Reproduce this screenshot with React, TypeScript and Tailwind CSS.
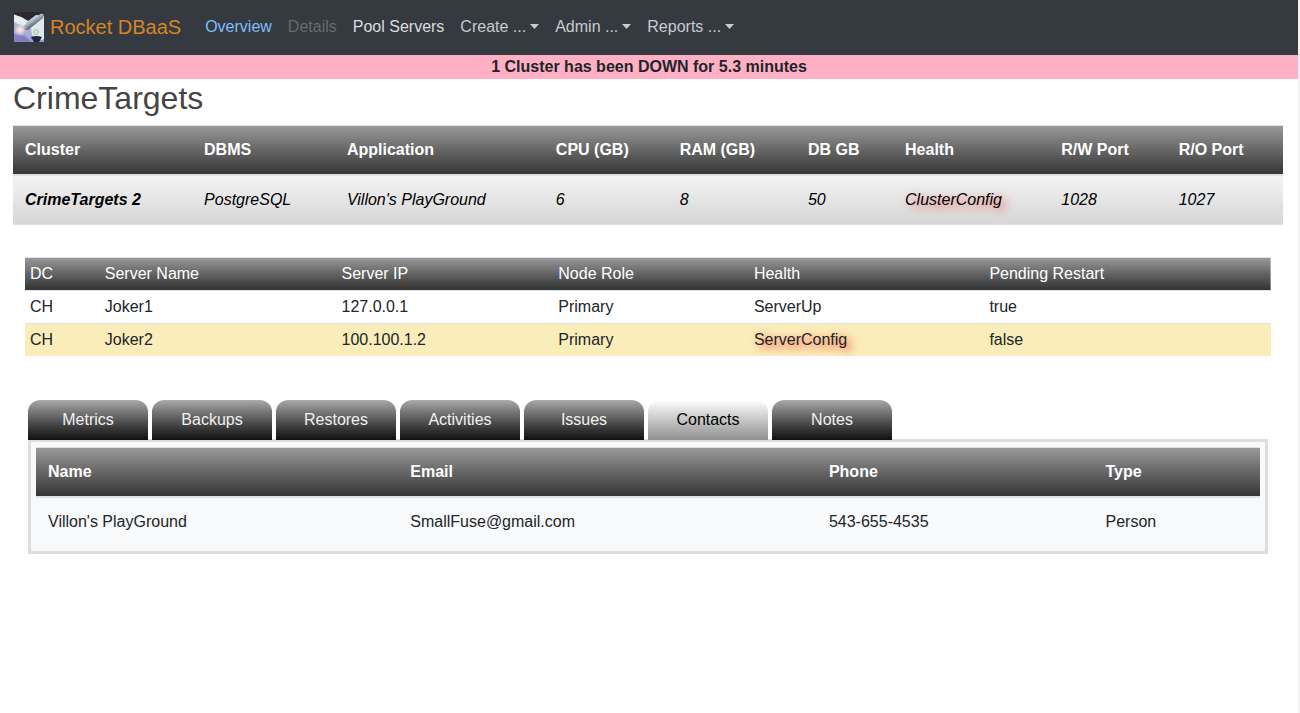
import React from "react";

const clusterHeads = ["Cluster", "DBMS", "Application", "CPU (GB)", "RAM (GB)", "DB GB", "Health", "R/W Port", "R/O Port"];
const clusterRow = ["CrimeTargets 2", "PostgreSQL", "Villon's PlayGround", "6", "8", "50", "ClusterConfig", "1028", "1027"];

const serverHeads = ["DC", "Server Name", "Server IP", "Node Role", "Health", "Pending Restart"];
const serverRows = [
  ["CH", "Joker1", "127.0.0.1", "Primary", "ServerUp", "true"],
  ["CH", "Joker2", "100.100.1.2", "Primary", "ServerConfig", "false"],
];

const contactHeads = ["Name", "Email", "Phone", "Type"];
const contactRow = ["Villon's PlayGround", "SmallFuse@gmail.com", "543-655-4535", "Person"];

const tabs = ["Metrics", "Backups", "Restores", "Activities", "Issues", "Contacts", "Notes"];

const clusterCols = ["w-[14.1%]", "w-[11.25%]", "w-[16.45%]", "w-[9.75%]", "w-[10.1%]", "w-[7.65%]", "w-[12.3%]", "w-[9.25%]", "w-[9.15%]"];
const serverCols = ["w-[6%]", "w-[19%]", "w-[17.4%]", "w-[15.7%]", "w-[18.9%]", "w-[23%]"];
const contactCols = ["w-[29.6%]", "w-[34.2%]", "w-[22.6%]", "w-[13.6%]"];

function Logo() {
  return (
    <svg viewBox="0 0 30 30" className="size-[30px]" aria-hidden="true">
      <defs>
        <linearGradient id="sky" x1="0" y1="0" x2="0" y2="1">
          <stop offset="0" stopColor="#d9e3ee" />
          <stop offset="0.5" stopColor="#a9a9d6" />
          <stop offset="1" stopColor="#9a98cc" />
        </linearGradient>
        <linearGradient id="hull" gradientUnits="userSpaceOnUse" x1="17" y1="6" x2="21" y2="12">
          <stop offset="0" stopColor="#d5dde0" />
          <stop offset="0.5" stopColor="#a3afb5" />
          <stop offset="1" stopColor="#65727a" />
        </linearGradient>
        <radialGradient id="flame">
          <stop offset="0" stopColor="#fff3dc" />
          <stop offset="0.5" stopColor="#e6d5d6" stopOpacity="0.8" />
          <stop offset="1" stopColor="#b9b0d8" stopOpacity="0" />
        </radialGradient>
        <filter id="soften">
          <feGaussianBlur stdDeviation="0.5" />
        </filter>
      </defs>
      <rect width="30" height="30" fill="url(#sky)" />
      <g filter="url(#soften)">
        <path d="M-1 -1H31V4L22 3 14 9 7 5 -1 3Z" fill="#292b2f" />
        <path d="M-1 2 7 5 14 9 9 15 4 12 -1 9Z" fill="#e8eef0" />
        <path d="M17 12 31 4V27L27 28 23 25 19 25 16 18Z" fill="#dde8f0" />
        <path d="M-1 22 6 22 12 25 18 31H-1Z" fill="#8280c0" />
        <path d="M10 17 17 16 18 24 13 26Z" fill="#a9afdb" />
        <path d="M10 14 25 3Q28 0 30 3L29 6 14 18 10 18Z" fill="url(#hull)" />
        <circle cx="6" cy="18" r="7" fill="url(#flame)" />
        <circle cx="22" cy="20" r="2.5" fill="#d2e0dd" stroke="#a9cb86" strokeWidth="1" />
        <path d="M17 25Q22 23 28 25L25 30H20Z" fill="#20263a" />
      </g>
    </svg>
  );
}

function Menu({ label }: { label: string }) {
  return (
    <button type="button" className="flex items-center gap-1 px-2 py-2 text-[#c8cbcf]">
      {label}
      <svg viewBox="0 0 9 5" className="mb-px h-[5px] w-[9px] fill-current" aria-hidden="true">
        <path d="M0 0H9L4.5 5Z" />
      </svg>
    </button>
  );
}

export default function App() {
  return (
    <div className="min-h-screen border-r-2 border-[#f1f1f1] bg-white font-['Liberation_Sans',Arial,sans-serif] text-base text-[#212529]">
      <nav className="flex h-[55px] items-center bg-[#343a40] px-3.5 pb-0.5">
        <a href="#home" className="mr-4 flex items-center gap-1.5 text-xl text-[#d68424]">
          <Logo />
          Rocket DBaaS
        </a>
        <a href="#overview" className="px-2 py-2 text-[#80bdff]">Overview</a>
        <a href="#details" aria-disabled="true" className="px-2 py-2 text-[#666b70]">Details</a>
        <a href="#pool" className="px-2 py-2 text-[#dcdddf]">Pool Servers</a>
        <Menu label="Create ..." />
        <Menu label="Admin ..." />
        <Menu label="Reports ..." />
      </nav>

      <div role="alert" className="bg-[#ffb0c4] text-center font-bold">
        1 Cluster has been DOWN for 5.3 minutes
      </div>

      <main className="pr-[15px] pl-[13px]">
        <h1 className="mb-2 text-[32px] leading-[38px] text-[#444]">CrimeTargets</h1>

        <table className="w-full table-fixed border-separate border-spacing-0 text-left">
          <thead>
            <tr className="bg-linear-to-b from-[#9c9c9c] to-[#333] text-white">
              {clusterHeads.map((h, i) => (
                <th key={h} className={`${clusterCols[i]} border-t border-b-2 border-[#dee2e6] px-3 py-3 font-bold`}>{h}</th>
              ))}
            </tr>
          </thead>
          <tbody>
            <tr className="bg-linear-to-b from-[#f3f3f3] to-[#d6d6d6] text-black italic">
              {clusterRow.map((c, i) => (
                <td key={i} className={`border-b border-[#dee2e6] px-3 py-3 ${i === 0 ? "font-bold" : ""} ${i === 6 ? "[text-shadow:4px_3px_10px_#ff000099]" : ""}`}>{c}</td>
              ))}
            </tr>
          </tbody>
        </table>

        <div className="mt-8 px-3">
          <table className="w-full table-fixed border-separate border-spacing-0 text-left">
            <thead>
              <tr className="bg-linear-to-b from-[#9c9c9c] to-[#333] text-white">
                {serverHeads.map((h, i) => (
                  <th key={h} className={`${serverCols[i]} border-t border-[#dee2e6] px-[5px] py-1 font-normal`}>{h}</th>
                ))}
              </tr>
            </thead>
            <tbody>
              {serverRows.map((row, r) => (
                <tr key={r} className={r === 1 ? "bg-[#faedba]" : ""}>
                  {row.map((c, i) => (
                    <td key={i} className={`border-t border-[#dee2e6] px-[5px] py-1 ${c === "ServerConfig" ? "[text-shadow:4px_3px_10px_#ff0000cc]" : ""}`}>{c}</td>
                  ))}
                </tr>
              ))}
            </tbody>
          </table>
        </div>

        <section className="mt-11 px-[15px]">
          <div role="tablist" className="relative flex gap-1">
            {tabs.map((t) => (
              <button
                key={t}
                type="button"
                role="tab"
                aria-selected={t === "Contacts"}
                className={`h-10 w-[120px] rounded-t-xl bg-linear-to-b ${t === "Contacts" ? "from-white to-[#909090] text-black" : "from-[#aaa] to-[#111] text-[#f1f1f1]"}`}
              >
                {t}
              </button>
            ))}
          </div>
          <div role="tabpanel" className="-mt-px border-3 border-[#ddd] bg-[#f8f9fa] p-[5px]">
            <table className="w-full table-fixed border-separate border-spacing-0 text-left">
              <thead>
                <tr className="bg-linear-to-b from-[#9c9c9c] to-[#333] text-white">
                  {contactHeads.map((h, i) => (
                    <th key={h} className={`${contactCols[i]} border-t border-b-2 border-[#dee2e6] px-3 py-3 font-bold`}>{h}</th>
                  ))}
                </tr>
              </thead>
              <tbody>
                <tr>
                  {contactRow.map((c) => (
                    <td key={c} className="px-3 py-3">{c}</td>
                  ))}
                </tr>
              </tbody>
            </table>
          </div>
        </section>
      </main>
    </div>
  );
}
